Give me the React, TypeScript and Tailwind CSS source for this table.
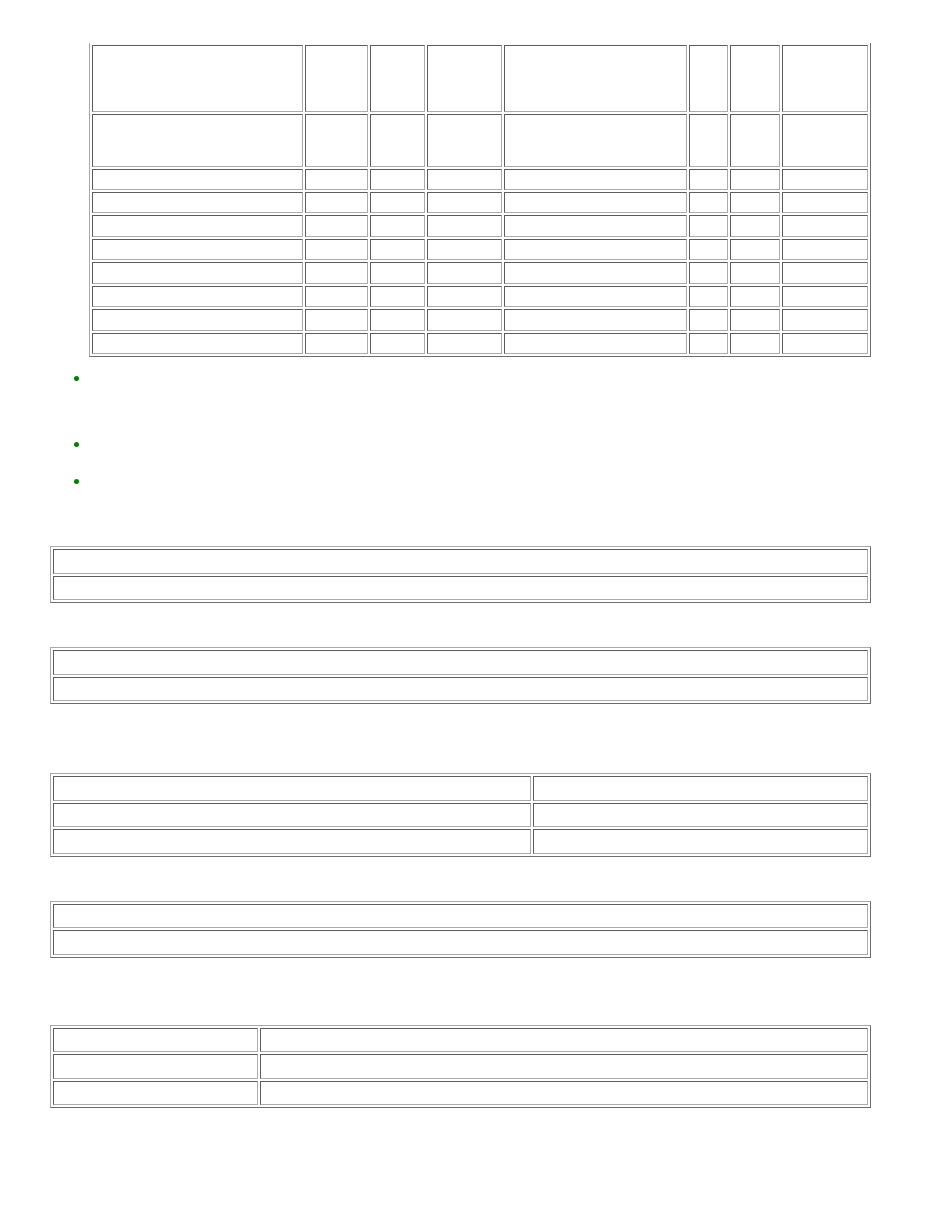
type GridProps = {
	cols: number[];
	rows: number[];
	noTop?: boolean;
	className?: string;
};

// Old-school border=1 table: outset frame, inset cells, 2px spacing.
function Grid({ cols, rows, noTop, className = "" }: GridProps) {
	return (
		<table
			className={`table-fixed border-separate border-spacing-[2px] border border-t-[#a9a9a9] border-l-[#a9a9a9] border-b-[#6e6e6e] border-r-[#6e6e6e] ${noTop ? "border-t-0" : ""} ${className}`}
		>
			<colgroup>
				{cols.map((c, i) => (
					<col key={i} style={{ width: c }} />
				))}
			</colgroup>
			<tbody>
				{rows.map((h, r) => (
					<tr key={r}>
						{cols.map((w, c) => (
							<td
								key={c}
								className="p-0 border border-t-[#5c5c5c] border-l-[#5c5c5c] border-b-[#ababab] border-r-[#ababab]"
							>
								<div style={{ height: h, width: w - 2 }} />
							</td>
						))}
					</tr>
				))}
			</tbody>
		</table>
	);
}

function Bullet({ className = "" }: { className?: string }) {
	return (
		<div className={`flex items-center pl-[74px] ${className}`}>
			<span className="block h-[5px] w-[5px] rounded-full bg-[#008000]" />
		</div>
	);
}

export default function App() {
	return (
		<div className="min-h-[1211px] w-[936px] bg-white font-['Liberation_Serif',serif] text-black">
			<div className="pt-[43px] pl-[89px]">
				<Grid
					noTop
					cols={[211, 63, 55, 75, 183, 39, 50, 86]}
					rows={[65, 51, 19, 19, 20, 19, 20, 19, 20, 19]}
				/>
			</div>

			<Bullet className="mt-[19px]" />
			<Bullet className="mt-[61px]" />
			<Bullet className="mt-[32px]" />

			<div className="pl-[50px]">
				<Grid className="mt-[62px]" cols={[815]} rows={[22.5, 22.5]} />
				<Grid className="mt-[44px]" cols={[815]} rows={[22.5, 22.5]} />
				<Grid className="mt-[69px]" cols={[478, 335]} rows={[22.5, 22.5, 22.5]} />
				<Grid className="mt-[44px]" cols={[815]} rows={[22.5, 22.5]} />
				<Grid className="mt-[67px]" cols={[205, 608]} rows={[22.5, 22.5, 22.5]} />
			</div>
		</div>
	);
}
